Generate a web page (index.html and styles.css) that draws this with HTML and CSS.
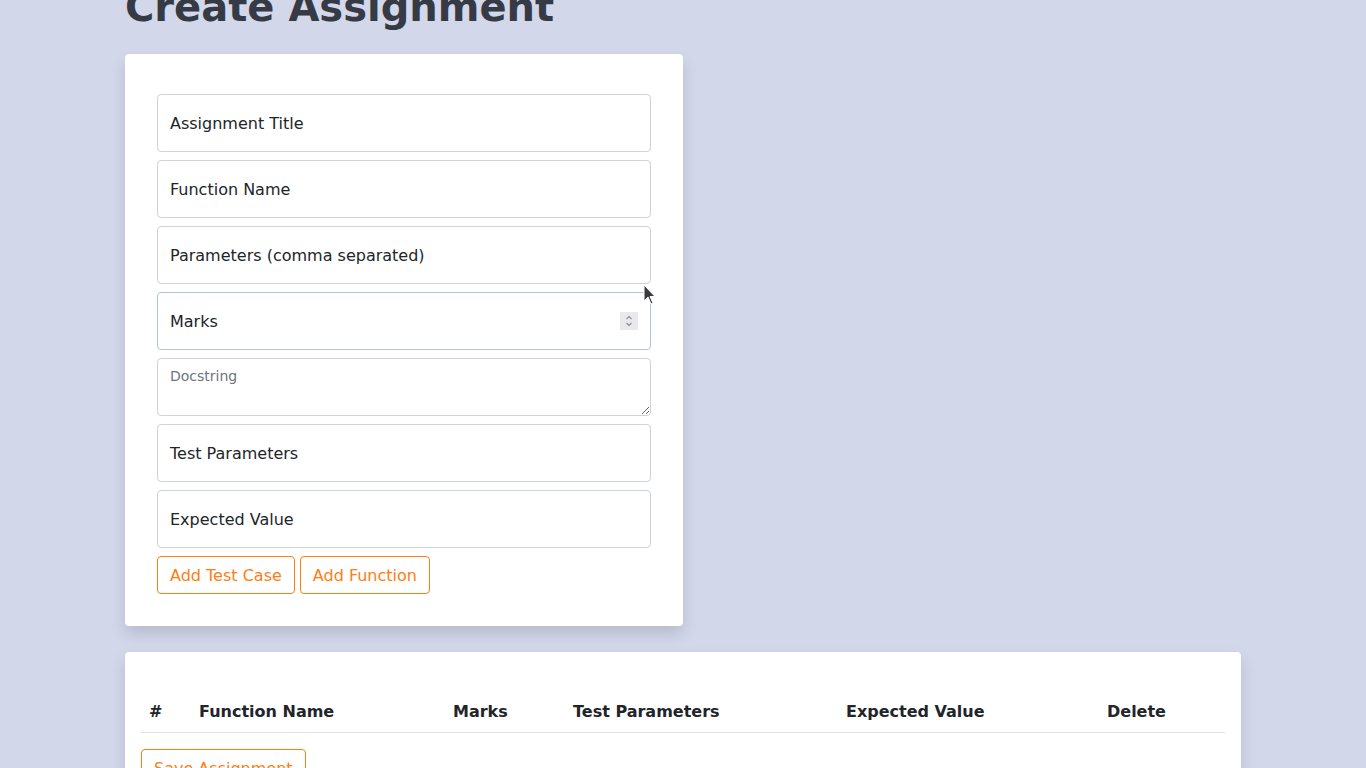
FILE: index.html
```html
<!DOCTYPE html>
<html lang="en">
<head>
<meta charset="utf-8">
<title>Create Assignment</title>
<link rel="stylesheet" href="styles.css">
</head>
<body>
<main class="container">
  <h1 class="title">Create Assignment</h1>
  <section class="card form-card">
    <div class="field"><input class="control" type="text"><span class="flabel">Assignment Title</span></div>
    <div class="field"><input class="control" type="text"><span class="flabel">Function Name</span></div>
    <div class="field"><input class="control" type="text"><span class="flabel">Parameters (comma separated)</span></div>
    <div class="field"><input class="control focused" type="text"><span class="flabel">Marks</span>
      <span class="spinner"><svg width="10" height="14" viewBox="0 0 10 14"><path d="M2.5 5 L5 2.5 L7.5 5 M2.5 9 L5 11.5 L7.5 9" fill="none" stroke="#8a8a96" stroke-width="1.1"/></svg></span>
      <svg class="cursor" width="14" height="22" viewBox="0 0 14 22"><path d="M1 1 L1 17 L5 13 L8 20 L10 19 L7 12.5 L12 12.5 Z" fill="#3a3a3a" stroke="#fff" stroke-width="1"/></svg>
    </div>
    <div class="field"><textarea class="control area" placeholder="Docstring"></textarea></div>
    <div class="field"><input class="control" type="text"><span class="flabel">Test Parameters</span></div>
    <div class="field"><input class="control" type="text"><span class="flabel">Expected Value</span></div>
    <div class="actions">
      <button class="btn">Add Test Case</button>
      <button class="btn">Add Function</button>
    </div>
  </section>
  <section class="card table-card">
    <table class="table">
      <thead>
        <tr>
          <th class="c1">#</th>
          <th class="c2">Function Name</th>
          <th class="c3">Marks</th>
          <th class="c4">Test Parameters</th>
          <th class="c5">Expected Value</th>
          <th class="c6">Delete</th>
        </tr>
      </thead>
      <tbody></tbody>
    </table>
    <button class="btn save">Save Assignment</button>
  </section>
</main>
</body>
</html>
```
FILE: styles.css
```css
* { box-sizing: border-box; }
html, body { margin: 0; padding: 0; }
body {
  background: #d2d7ea;
  font-family: "DejaVu Sans", sans-serif;
  color: #212529;
  height: 768px;
  overflow: hidden;
}
.container {
  width: 1116px;
  margin: 0 auto;
  display: flex;
  flex-direction: column;
  align-items: flex-start;
}
.title {
  font-size: 40px;
  font-weight: 700;
  line-height: 48px;
  color: #363a45;
  margin: -17px 0 23px 0;
}
.card {
  background: #fff;
  border-radius: 4px;
  box-shadow: 0 8px 16px rgba(0, 0, 0, 0.13);
}
.form-card {
  width: 558px;
  padding: 40px 32px 32px 32px;
  display: flex;
  flex-direction: column;
  gap: 8px;
}
.field {
  position: relative;
  height: 58px;
}
.control {
  display: block;
  width: 100%;
  height: 58px;
  border: 1px solid #ced4da;
  border-radius: 4px;
  background: #fff;
  font-family: inherit;
  font-size: 16px;
  padding: 0 12px;
  outline: none;
  margin: 0;
}
.control.focused { border-color: #b3c3e8; }
.area {
  resize: vertical;
  padding: 7px 12px;
  font-size: 14px;
  line-height: 20px;
}
.area::placeholder { color: #6c757d; }
.flabel {
  position: absolute;
  left: 13px;
  top: 0;
  height: 58px;
  display: flex;
  align-items: center;
  font-size: 16px;
  color: #212529;
  pointer-events: none;
}
.spinner {
  position: absolute;
  right: 13px;
  top: 20px;
  width: 18px;
  height: 18px;
  background: #e9e9ed;
  display: flex;
  align-items: center;
  justify-content: center;
}
.cursor {
  position: absolute;
  left: 486px;
  top: -8px;
}
.actions {
  display: flex;
  gap: 5px;
}
.btn {
  font-family: inherit;
  font-size: 16px;
  line-height: 24px;
  padding: 7px 12px 5px 12px;
  color: #fd7e14;
  background: #fff;
  border: 1px solid #fd7e14;
  border-radius: 4px;
  cursor: pointer;
}
.table-card {
  margin-top: 26px;
  width: 1116px;
  padding: 40px 16px 24px 16px;
}
.table {
  width: 100%;
  border-collapse: collapse;
}
.table th {
  text-align: left;
  font-size: 16px;
  font-weight: 700;
  padding: 8px;
  line-height: 24px;
  border-bottom: 1px solid #dee2e6;
}
.c1 { width: 50px; }
.c2 { width: 254px; }
.c3 { width: 120px; }
.c4 { width: 273px; }
.c5 { width: 261px; }
.c6 { width: 126px; }
.save { margin-top: 16px; }
```
